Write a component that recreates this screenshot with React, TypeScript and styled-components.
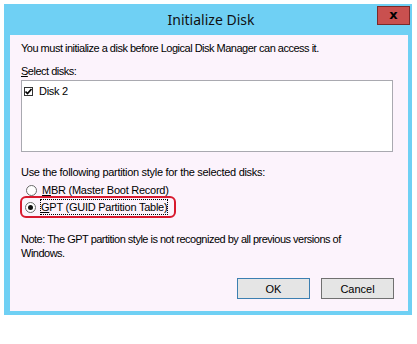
import { createGlobalStyle } from "styled-components";
import styled from "styled-components";

const GlobalStyle = createGlobalStyle`
  html, body {
    margin: 0;
    padding: 0;
    background: #ffffff;
  }
  body {
    font-family: "Liberation Sans", Arial, sans-serif;
  }
`;

export default function App() {
  return (
    <>
      <GlobalStyle />
      <Window>
        <TitleBar>
          <Title>Initialize Disk</Title>
          <CloseButton>x</CloseButton>
        </TitleBar>
        <Content>
          <Text>You must initialize a disk before Logical Disk Manager can access it.</Text>
          <Label>
            <u>S</u>elect disks:
          </Label>
          <ListBox>
            <ListItem>
              <CheckBox>
                <svg width="7" height="7" viewBox="0 0 7 7">
                  <path d="M0.5 3.5 L2.5 5.5 L6.5 1" stroke="#000" strokeWidth="1.6" fill="none" />
                </svg>
              </CheckBox>
              Disk 2
            </ListItem>
          </ListBox>
          <SectionText>Use the following partition style for the selected disks:</SectionText>
          <RadioRow>
            <Radio />
            <span>
              <u>M</u>BR (Master Boot Record)
            </span>
          </RadioRow>
          <Highlight>
            <RadioRow>
              <Radio checked />
              <Focused>
                <u>G</u>PT (GUID Partition Table)
              </Focused>
            </RadioRow>
          </Highlight>
          <Note>
            Note: The GPT partition style is not recognized by all previous versions of
            Windows.
          </Note>
          <Buttons>
            <Button primary>OK</Button>
            <Button>Cancel</Button>
          </Buttons>
        </Content>
      </Window>
    </>
  );
}

const Window = styled.div`
  margin: 4px;
  width: 408px;
  box-sizing: border-box;
  background: #6fd0f4;
  padding: 0 4px 4px 6px;
`;

const TitleBar = styled.div`
  position: relative;
  height: 31px;
  display: flex;
  align-items: center;
  justify-content: center;
`;

const Title = styled.div`
  font-family: "Noto Sans", "Open Sans", sans-serif;
  font-size: 14px;
  color: #111;
  margin-left: 4px;
`;

const CloseButton = styled.div`
  position: absolute;
  top: 2px;
  right: -2px;
  width: 33px;
  height: 19px;
  box-sizing: border-box;
  background: #c9504f;
  border: 1px solid #7a2a2a;
  color: #000;
  font-family: "DejaVu Sans", sans-serif;
  font-weight: bold;
  font-size: 13px;
  line-height: 15px;
  text-align: center;
`;

const Content = styled.div`
  background: #fcf3fc;
  height: 276px;
  box-sizing: border-box;
  padding: 6px 11px 0 11px;
  font-size: 11px;
  color: #000;
  display: flex;
  flex-direction: column;
`;

const Text = styled.div`
  line-height: 14px;
  letter-spacing: -0.5px;
`;

const Label = styled(Text)`
  margin-top: 9px;
`;

const ListBox = styled.div`
  margin-top: 2px;
  width: 372px;
  height: 72px;
  box-sizing: border-box;
  background: #ffffff;
  border: 1px solid #a9a9b0;
  padding: 3px 2px;
`;

const ListItem = styled.div`
  display: flex;
  align-items: center;
  gap: 6px;
  font-size: 11px;
  line-height: 14px;
  letter-spacing: -0.3px;
`;

const CheckBox = styled.span`
  width: 9px;
  height: 9px;
  box-sizing: border-box;
  border: 1px solid #333;
  background: #fff;
  display: flex;
  align-items: center;
  justify-content: center;
`;

const SectionText = styled(Text)`
  margin-top: 13px;
  letter-spacing: -0.3px;
`;

const RadioRow = styled.div`
  display: flex;
  align-items: center;
  gap: 5px;
  line-height: 14px;
  letter-spacing: -0.25px;
  margin-top: 4px;
  padding-left: 5px;
`;

const Radio = styled.span<{ checked?: boolean }>`
  width: 11px;
  height: 11px;
  box-sizing: border-box;
  border-radius: 50%;
  border: 1px solid #6a6a6a;
  background: #fff;
  display: flex;
  align-items: center;
  justify-content: center;
  &::after {
    content: "";
    width: 5px;
    height: 5px;
    border-radius: 50%;
    background: ${(p) => (p.checked ? "#111" : "transparent")};
  }
`;

const Highlight = styled.div`
  margin-left: -1px;
  margin-top: -1px;
  width: 156px;
  height: 22px;
  box-sizing: border-box;
  border: 2px solid #d8192e;
  border-radius: 6px;
  display: flex;
  align-items: center;
  & > div {
    margin-top: 0;
    padding-left: 3px;
  }
`;

const Focused = styled.span`
  outline: 1px dotted #000;
  outline-offset: 0;
`;

const Note = styled(Text)`
  margin-top: 14px;
  width: 345px;
`;

const Buttons = styled.div`
  margin-top: 18px;
  display: flex;
  justify-content: flex-end;
  gap: 11px;
  padding-right: 3px;
`;

const Button = styled.button<{ primary?: boolean }>`
  width: 73px;
  height: 21px;
  box-sizing: border-box;
  background: #e5e5e5;
  border: 1px solid ${(p) => (p.primary ? "#3c7fb1" : "#707070")};
  font-family: "Liberation Sans", Arial, sans-serif;
  font-size: 11px;
  color: #000;
  padding: 0;
`;
